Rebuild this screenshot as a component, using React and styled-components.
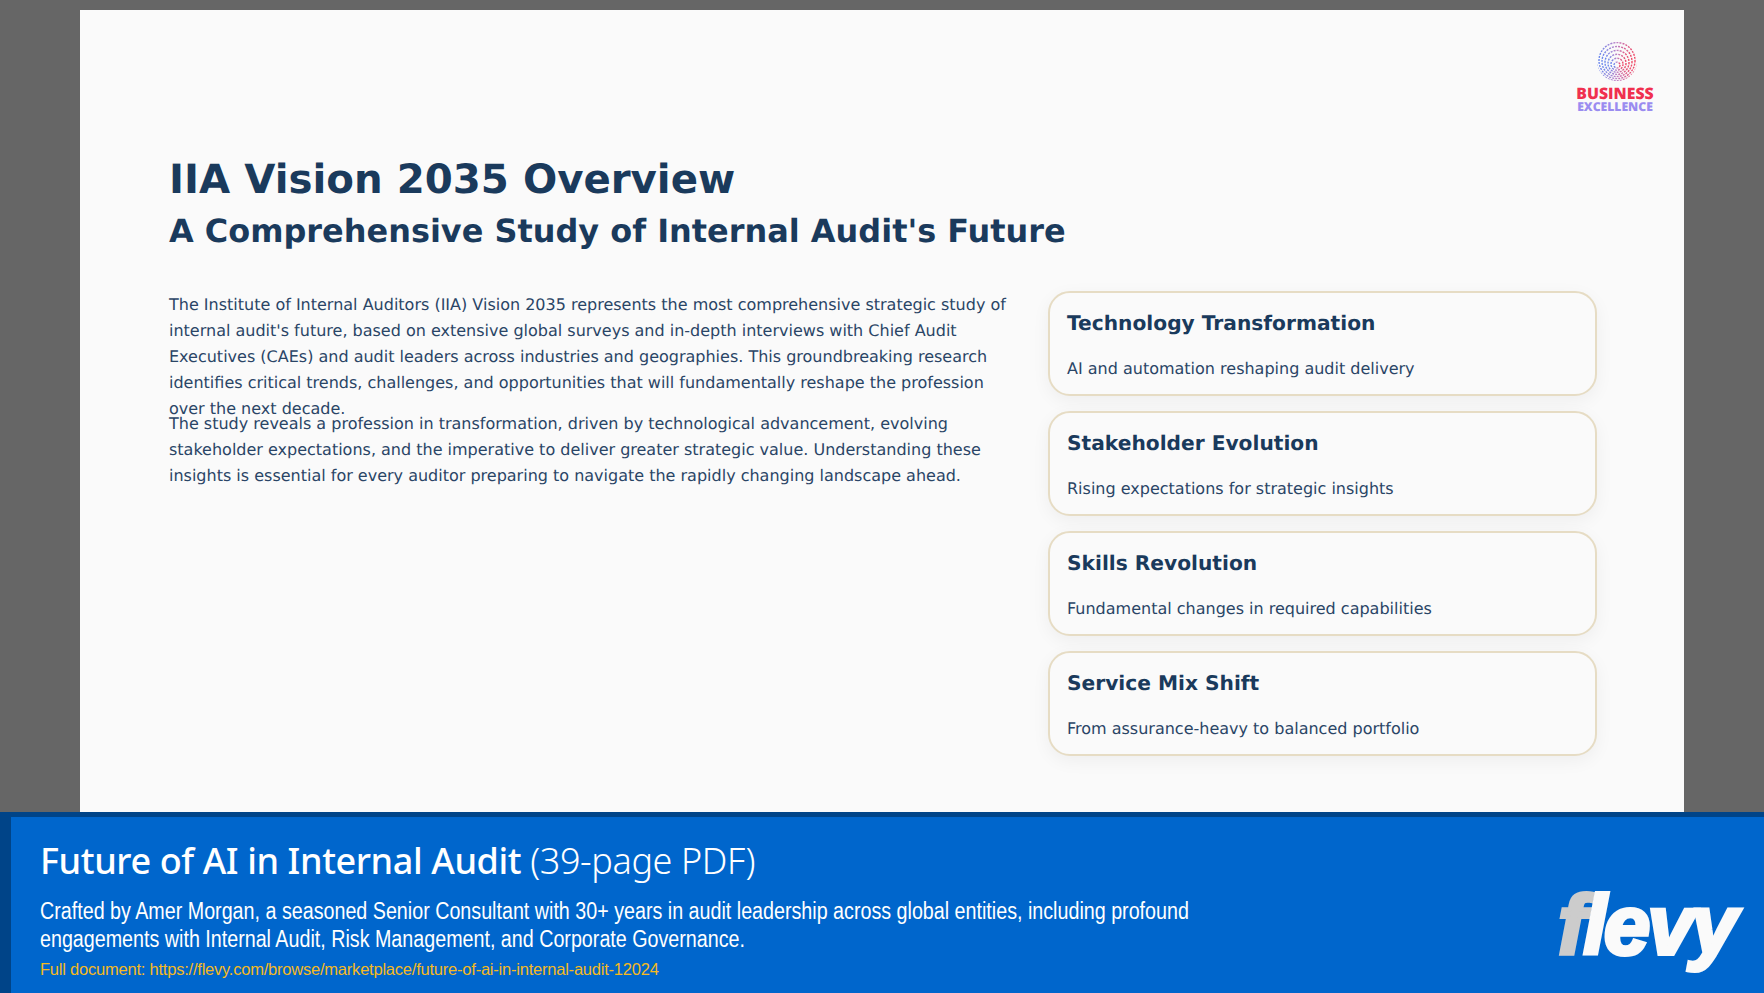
import React from 'react';
import styled, { createGlobalStyle } from 'styled-components';

const GlobalStyle = createGlobalStyle`
  html, body {
    margin: 0;
    padding: 0;
    background: #666666;
  }
`;

const Page = styled.div`
  width: 1764px;
  height: 993px;
  overflow: hidden;
  display: flex;
  flex-direction: column;
  align-items: center;
  background: #666666;
`;

const Slide = styled.section`
  position: relative;
  box-sizing: border-box;
  width: 1604px;
  height: 802px;
  margin-top: 10px;
  padding: 145px 87px 0 89px;
  background: #fafafa;
  color: #1a3a5c;
  font-family: "DejaVu Sans", sans-serif;
  text-rendering: geometricPrecision;
`;

const Brand = styled.div`
  position: absolute;
  top: 28px;
  right: 29px;
  width: 80px;
  display: flex;
  flex-direction: column;
  align-items: center;
`;

const BrandMarkSvg = styled.svg`
  margin: 0 0 1px 3px;
`;

const BrandName = styled.div`
  font-family: "Open Sans", sans-serif;
  font-weight: 800;
  white-space: nowrap;
  font-size: ${p => p.$size}px;
  line-height: ${p => p.$line}px;
  color: ${p => p.$color};
`;

const Title = styled.h1`
  margin: 0;
  font-size: 40.3px;
  line-height: 50px;
  font-weight: 700;
`;

const Subtitle = styled.h2`
  margin: 1px 0 0;
  font-size: 31.95px;
  line-height: 50px;
  font-weight: 700;
`;

const Columns = styled.div`
  display: grid;
  grid-template-columns: 849px 549px;
  column-gap: 30px;
  margin-top: 35px;
`;

const Copy = styled.div`
  padding-top: 1px;
`;

const Paragraph = styled.p`
  margin: 0;
  height: ${p => p.$height}px;
  font-size: 16px;
  line-height: 25.9px;
  color: #2a4566;
`;

const Cards = styled.div`
  display: flex;
  flex-direction: column;
  gap: 15px;
`;

const Card = styled.div`
  box-sizing: border-box;
  height: 105px;
  padding: 15px 16px 0 17px;
  background: #fafafa;
  border: 2.5px solid #e6dcc4;
  border-radius: 22px;
  box-shadow: 0 5px 18px rgba(0, 0, 0, 0.05);
`;

const CardTitle = styled.h3`
  margin: 0;
  font-size: 20.2px;
  line-height: 30px;
  font-weight: 700;
`;

const CardText = styled.p`
  margin: 19px 0 0;
  font-size: 16px;
  line-height: 24px;
  color: #2a4566;
`;

const Bar = styled.footer`
  box-sizing: border-box;
  width: 100%;
  height: 181px;
  padding: 19px 20px 0 29px;
  display: flex;
  justify-content: space-between;
  background: #0066cc;
  border-top: 5px solid #004488;
  border-left: 11px solid #004488;
  color: #ffffff;
`;

const BarText = styled.div`
  width: 1200px;
`;

const BarTitle = styled.div`
  font-family: "Noto Sans", sans-serif;
  font-size: 36px;
  line-height: 50px;
  font-weight: 550;
  letter-spacing: -0.4px;
  white-space: nowrap;
`;

const BarPages = styled.span`
  font-weight: 300;
`;

const BarDesc = styled.div`
  width: 1432px;
  margin-top: 11px;
  font-family: "Liberation Sans", sans-serif;
  font-size: 23.5px;
  line-height: 28px;
  transform: scaleX(0.838);
  transform-origin: left top;
`;

const BarLink = styled.div`
  margin-top: 5px;
  font-family: "Liberation Sans", sans-serif;
  font-size: 16.5px;
  line-height: 22px;
  color: #f5b921;
  letter-spacing: -0.22px;
`;

const Flevy = styled.div`
  margin-top: 50px;
  margin-right: 9px;
  font-family: "Liberation Sans", sans-serif;
  font-size: 83px;
  line-height: 80px;
  font-weight: 700;
  font-style: italic;
  letter-spacing: -2.5px;
  color: #fafafa;
  -webkit-text-stroke: 4px currentColor;
`;

const FlevyF = styled.span`
  color: #cccccc;
`;

const rings = [3, 6, 9, 12, 15, 18, 21, 24];

const BrandMark = () => (
  <BrandMarkSvg width="46" height="46" viewBox="-23 -23 46 46">
    <defs>
      <linearGradient id="brandGrad" x1="0" x2="1" y1="0" y2="0">
        <stop offset="0" stopColor="#6a88ee" />
        <stop offset="0.5" stopColor="#c080c4" />
        <stop offset="1" stopColor="#f04a66" />
      </linearGradient>
      <clipPath id="brandClip">
        <circle r="20" />
      </clipPath>
    </defs>
    <g clipPath="url(#brandClip)">
      {rings.map(r => (
        <circle
          key={r}
          r={r}
          cy={5 - r * 0.3}
          fill="none"
          stroke="url(#brandGrad)"
          strokeWidth="1.4"
          strokeDasharray="2 1.1"
        />
      ))}
    </g>
  </BrandMarkSvg>
);

const cards = [
  ['Technology Transformation', 'AI and automation reshaping audit delivery'],
  ['Stakeholder Evolution', 'Rising expectations for strategic insights'],
  ['Skills Revolution', 'Fundamental changes in required capabilities'],
  ['Service Mix Shift', 'From assurance-heavy to balanced portfolio'],
];

const App = () => {
  return (
    <Page>
      <GlobalStyle />
      <Slide>
        <Brand>
          <BrandMark />
          <BrandName $size={15.8} $line={16} $color="#f0304f">BUSINESS</BrandName>
          <BrandName $size={12.2} $line={12} $color="#9a8cf0">EXCELLENCE</BrandName>
        </Brand>
        <Title>IIA Vision 2035 Overview</Title>
        <Subtitle>A Comprehensive Study of Internal Audit's Future</Subtitle>
        <Columns>
          <Copy>
            <Paragraph $height={119}>
              The Institute of Internal Auditors (IIA) Vision 2035 represents the most comprehensive strategic study of internal audit's future, based on extensive global surveys and in-depth interviews with Chief Audit Executives (CAEs) and audit leaders across industries and geographies. This groundbreaking research identifies critical trends, challenges, and opportunities that will fundamentally reshape the profession over the next decade.
            </Paragraph>
            <Paragraph>
              The study reveals a profession in transformation, driven by technological advancement, evolving stakeholder expectations, and the imperative to deliver greater strategic value. Understanding these insights is essential for every auditor preparing to navigate the rapidly changing landscape ahead.
            </Paragraph>
          </Copy>
          <Cards>
            {cards.map(([title, text]) => (
              <Card key={title}>
                <CardTitle>{title}</CardTitle>
                <CardText>{text}</CardText>
              </Card>
            ))}
          </Cards>
        </Columns>
      </Slide>
      <Bar>
        <BarText>
          <BarTitle>Future of AI in Internal Audit <BarPages>(39-page PDF)</BarPages></BarTitle>
          <BarDesc>Crafted by Amer Morgan, a seasoned Senior Consultant with 30+ years in audit leadership across global entities, including profound engagements with Internal Audit, Risk Management, and Corporate Governance.</BarDesc>
          <BarLink>Full document: https://flevy.com/browse/marketplace/future-of-ai-in-internal-audit-12024</BarLink>
        </BarText>
        <Flevy><FlevyF>f</FlevyF>levy</Flevy>
      </Bar>
    </Page>
  );
};

export default App;
